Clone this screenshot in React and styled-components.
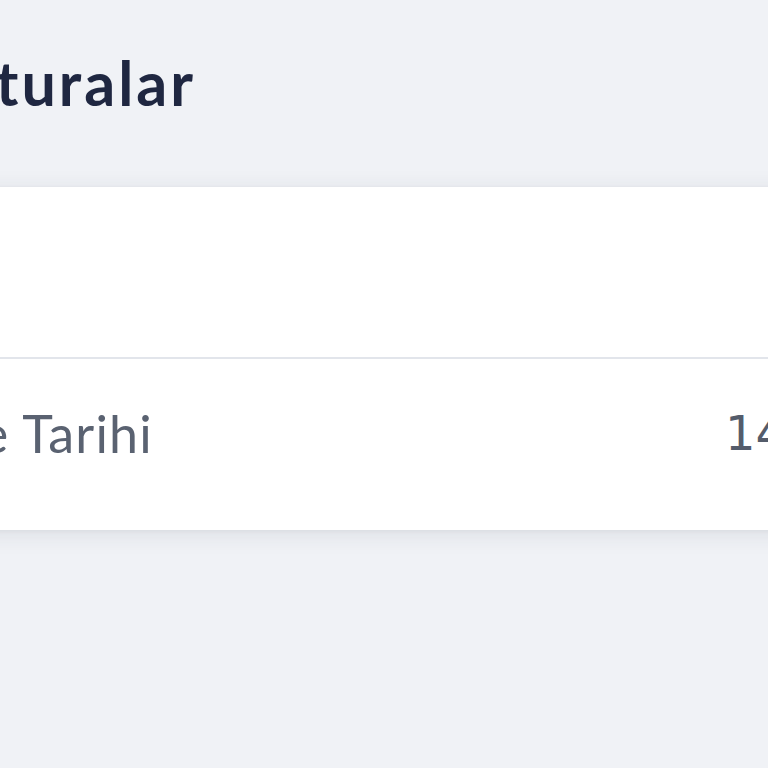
import React from "react";
import styled, { createGlobalStyle } from "styled-components";

const Global = createGlobalStyle`
  html, body {
    margin: 0;
    padding: 0;
    background: #f0f2f6;
    overflow: hidden;
  }
  body {
    font-family: Lato, "Noto Sans", sans-serif;
  }
`;

const Page = styled.div`
  width: 768px;
  height: 768px;
  display: flex;
  flex-direction: column;
  background: #f0f2f6;
  overflow: hidden;
`;

const TitleBar = styled.div`
  width: 196px;
  height: 187px;
  padding-top: 52px;
  box-sizing: border-box;
  display: flex;
  justify-content: flex-end;
  white-space: nowrap;
`;

const Title = styled.h1`
  margin: 0;
  font-size: 61px;
  line-height: 1;
  font-weight: 700;
  color: #1f2741;
  letter-spacing: 3px;
`;

const Card = styled.section`
  background: #ffffff;
  margin: 0 -40px;
  box-shadow: 0 4px 22px rgba(40, 50, 70, 0.1), 0 1px 4px rgba(40, 50, 70, 0.05);
  display: flex;
  flex-direction: column;
`;

const CardHeader = styled.div`
  height: 170px;
  border-bottom: 2px solid #e2e5eb;
`;

const Row = styled.div`
  height: 171px;
  box-sizing: border-box;
  padding: 0 0 24px 40px;
  display: flex;
  align-items: center;
`;

const Label = styled.div`
  width: 153px;
  display: flex;
  justify-content: flex-end;
  white-space: nowrap;
  font-size: 52px;
  font-weight: 400;
  letter-spacing: 1.2px;
  color: #5a6271;
`;

const Value = styled.div`
  margin-left: 572px;
  white-space: nowrap;
  font-family: "DejaVu Sans", sans-serif;
  font-size: 48px;
  color: #545c6b;
`;

export default function App() {
  return (
    <Page>
      <Global />
      <TitleBar>
        <Title>Faturalar</Title>
      </TitleBar>
      <Card>
        <CardHeader />
        <Row>
          <Label>Düzenleme Tarihi</Label>
          <Value>14.03.2024</Value>
        </Row>
      </Card>
    </Page>
  );
}
